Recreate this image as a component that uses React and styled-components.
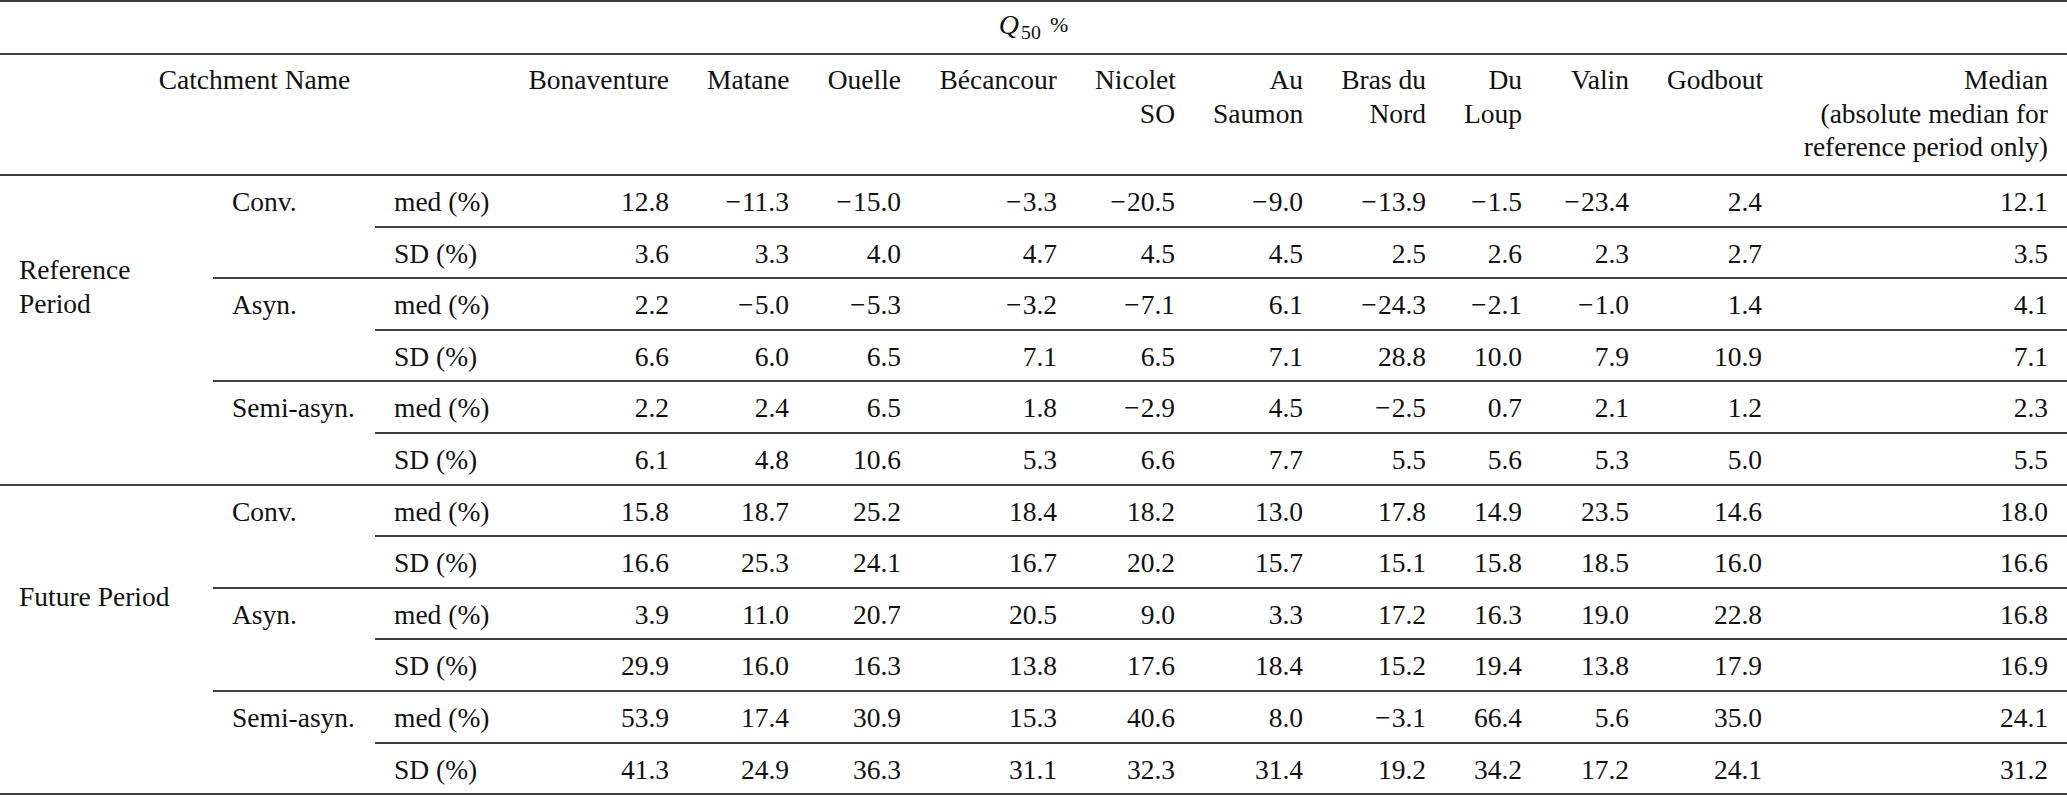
import React from 'react';
import styled, { createGlobalStyle } from 'styled-components';

const SERIF = '"Liberation Serif", "Times New Roman", Times, serif';

const GlobalStyle = createGlobalStyle`
  html, body {
    margin: 0;
    padding: 0;
    background: #fff;
  }
  body {
    font-family: ${SERIF};
    color: #111;
  }
`;

const RULE = '2px solid #404040';

const Table = styled.table`
  width: 2067px;
  border-collapse: collapse;
  table-layout: fixed;
  font-family: ${SERIF};
  font-size: 27.5px;
  line-height: 33.5px;
  color: #111;

  th, td {
    font-family: ${SERIF};
  }
`;

const TitleRow = styled.tr`
  height: 53px;
`;

const TitleCell = styled.th`
  padding: 6px 0 0;
  vertical-align: top;
  text-align: center;
  font-weight: normal;
  border-top: ${RULE};
  border-bottom: ${RULE};
`;

const Q = styled.i`
  font-style: italic;
  font-size: 1.02em;
`;

const Sub = styled.span`
  font-size: 0.72em;
  position: relative;
  top: 5px;
  margin-left: 2px;
`;

const Pct = styled.span`
  font-size: 0.8em;
  position: relative;
  top: -2px;
  margin-left: 9px;
`;

const HeadRow = styled.tr`
  height: 121px;
`;

const HeadCell = styled.th`
  padding: 8px 19px 0;
  vertical-align: top;
  text-align: ${p => p.$align || 'right'};
  font-weight: normal;
  border-bottom: ${RULE};
  white-space: nowrap;
`;

const BodyRow = styled.tr`
  height: 51.6px;
`;

const Cell = styled.td`
  padding: 9px 19px 0;
  vertical-align: top;
  border-bottom: ${RULE};
  white-space: nowrap;
`;

const PeriodCell = styled(Cell)`
  padding-top: ${p => p.$top}px;
`;

const NumCell = styled(Cell)`
  text-align: right;
`;

// math minus sits a touch wider than the text one
const Minus = styled.span`
  margin-right: 1px;
`;

const columns = [
  { w: 213 }, { w: 162 }, { w: 134 },
  { w: 179, name: ['Bonaventure'] },
  { w: 120, name: ['Matane'] },
  { w: 112, name: ['Ouelle'] },
  { w: 156, name: ['Bécancour'] },
  { w: 118, name: ['Nicolet', 'SO'] },
  { w: 128, name: ['Au', 'Saumon'] },
  { w: 123, name: ['Bras du', 'Nord'] },
  { w: 96, name: ['Du', 'Loup'] },
  { w: 107, name: ['Valin'] },
  { w: 133, name: ['Godbout'] },
  { w: 286, name: ['Median', '(absolute median for', 'reference period only)'] },
];

const periods = [
  {
    label: ['Reference', 'Period'],
    top: 77,
    groups: [
      { name: 'Conv.', med: [12.8, -11.3, -15.0, -3.3, -20.5, -9.0, -13.9, -1.5, -23.4, 2.4, 12.1], sd: [3.6, 3.3, 4.0, 4.7, 4.5, 4.5, 2.5, 2.6, 2.3, 2.7, 3.5] },
      { name: 'Asyn.', med: [2.2, -5.0, -5.3, -3.2, -7.1, 6.1, -24.3, -2.1, -1.0, 1.4, 4.1], sd: [6.6, 6.0, 6.5, 7.1, 6.5, 7.1, 28.8, 10.0, 7.9, 10.9, 7.1] },
      { name: 'Semi-asyn.', med: [2.2, 2.4, 6.5, 1.8, -2.9, 4.5, -2.5, 0.7, 2.1, 1.2, 2.3], sd: [6.1, 4.8, 10.6, 5.3, 6.6, 7.7, 5.5, 5.6, 5.3, 5.0, 5.5] },
    ],
  },
  {
    label: ['Future Period'],
    top: 94,
    groups: [
      { name: 'Conv.', med: [15.8, 18.7, 25.2, 18.4, 18.2, 13.0, 17.8, 14.9, 23.5, 14.6, 18.0], sd: [16.6, 25.3, 24.1, 16.7, 20.2, 15.7, 15.1, 15.8, 18.5, 16.0, 16.6] },
      { name: 'Asyn.', med: [3.9, 11.0, 20.7, 20.5, 9.0, 3.3, 17.2, 16.3, 19.0, 22.8, 16.8], sd: [29.9, 16.0, 16.3, 13.8, 17.6, 18.4, 15.2, 19.4, 13.8, 17.9, 16.9] },
      { name: 'Semi-asyn.', med: [53.9, 17.4, 30.9, 15.3, 40.6, 8.0, -3.1, 66.4, 5.6, 35.0, 24.1], sd: [41.3, 24.9, 36.3, 31.1, 32.3, 31.4, 19.2, 34.2, 17.2, 24.1, 31.2] },
    ],
  },
];

const Num = ({ v }) => (
  <>
    {v < 0 && <Minus>{'\u2212'}</Minus>}
    {Math.abs(v).toFixed(1)}
  </>
);

const Lines = ({ lines }) =>
  lines.map((l, i) => (
    <React.Fragment key={i}>
      {i > 0 && <br />}
      {l}
    </React.Fragment>
  ));

const App = () => {
  const rows = [];
  periods.forEach((period, pi) => {
    period.groups.forEach((g, gi) => {
      rows.push(
        <BodyRow key={`${pi}-${gi}-med`}>
          {gi === 0 && (
            <PeriodCell rowSpan={6} $top={period.top}>
              <Lines lines={period.label} />
            </PeriodCell>
          )}
          <Cell rowSpan={2}>{g.name}</Cell>
          <Cell>med (%)</Cell>
          {g.med.map((v, i) => <NumCell key={i}><Num v={v} /></NumCell>)}
        </BodyRow>
      );
      rows.push(
        <BodyRow key={`${pi}-${gi}-sd`}>
          <Cell>SD (%)</Cell>
          {g.sd.map((v, i) => <NumCell key={i}><Num v={v} /></NumCell>)}
        </BodyRow>
      );
    });
  });

  return (
    <>
      <GlobalStyle />
      <Table>
        <colgroup>
          {columns.map((c, i) => <col key={i} style={{ width: c.w }} />)}
        </colgroup>
        <thead>
          <TitleRow>
            <TitleCell colSpan={14}>
              <Q>Q</Q><Sub>50</Sub><Pct>%</Pct>
            </TitleCell>
          </TitleRow>
          <HeadRow>
            <HeadCell colSpan={3} $align="center">Catchment Name</HeadCell>
            {columns.slice(3).map((c, i) => (
              <HeadCell key={i}>
                <Lines lines={c.name} />
              </HeadCell>
            ))}
          </HeadRow>
        </thead>
        <tbody>{rows}</tbody>
      </Table>
    </>
  );
};

export default App;
